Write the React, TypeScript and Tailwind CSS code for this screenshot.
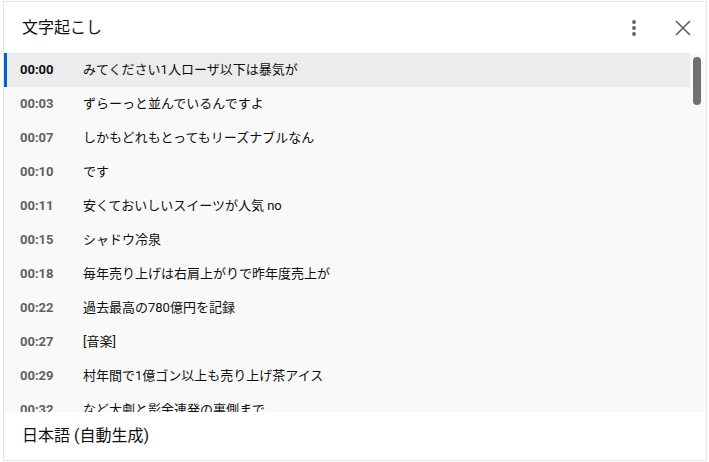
const rows: [string, string][] = [
  ["00:00", "みてください1人ローザ以下は暴気が"],
  ["00:03", "ずらーっと並んでいるんですよ"],
  ["00:07", "しかもどれもとってもリーズナブルなん"],
  ["00:10", "です"],
  ["00:11", "安くておいしいスイーツが人気 no"],
  ["00:15", "シャドウ冷泉"],
  ["00:18", "毎年売り上げは右肩上がりで昨年度売上が"],
  ["00:22", "過去最高の780億円を記録"],
  ["00:27", "[音楽]"],
  ["00:29", "村年間で1億ゴン以上も売り上げ茶アイス"],
  ["00:32", "など大劇と影余連発の裏側まで"],
];

export default function App() {
  return (
    <div
      className="h-[462px] w-[709px] bg-white pl-[3px] pt-px"
      style={{ fontFamily: "Roboto, 'Noto Sans CJK JP', sans-serif" }}
    >
      <div className="flex h-[460px] w-[704px] flex-col border border-[#e5e5e5] bg-white">
        <div className="flex h-[51px] shrink-0 items-center pl-[18px] pr-[3px]">
          <h2 className="flex-1 text-[16px] text-[#0f0f0f]">文字起こし</h2>
          <button className="flex h-10 w-10 items-center justify-center text-[#606060]">
            <svg width="24" height="24" viewBox="0 0 24 24" fill="currentColor">
              <circle cx="12" cy="6" r="1.9" />
              <circle cx="12" cy="12" r="1.9" />
              <circle cx="12" cy="18" r="1.9" />
            </svg>
          </button>
          <button className="ml-[9px] flex h-10 w-10 items-center justify-center text-[#606060]">
            <svg width="24" height="24" viewBox="0 0 24 24" fill="none" stroke="currentColor" strokeWidth="1.6">
              <path d="M5 5l14 14M19 5L5 19" />
            </svg>
          </button>
        </div>
        <div className="relative flex-1 overflow-hidden bg-[#f9f9f9]">
          <div className="pr-[16px]">
            {rows.map(([t, s], i) => (
              <div
                key={t}
                className={
                  i === 0
                    ? "flex h-[34px] items-center border-l-[3px] border-[#065fd4] bg-[#ececec] pl-[13px]"
                    : "flex h-[34px] items-center pl-[16px]"
                }
              >
                <span
                  className={
                    i === 0
                      ? "w-[63px] text-[13px] font-bold text-[#0f0f0f]"
                      : "w-[63px] text-[13px] font-bold text-[#606060]"
                  }
                >
                  {t}
                </span>
                <span className="text-[13px] text-[#0f0f0f]">{s}</span>
              </div>
            ))}
          </div>
          <div className="absolute right-[5px] top-[4px] h-[48px] w-[8px] rounded-full bg-[#717171]" />
        </div>
        <div className="flex h-[48px] shrink-0 items-center pl-[18px]">
          <span className="text-[16px] text-[#0f0f0f]">日本語 (自動生成)</span>
        </div>
      </div>
    </div>
  );
}
